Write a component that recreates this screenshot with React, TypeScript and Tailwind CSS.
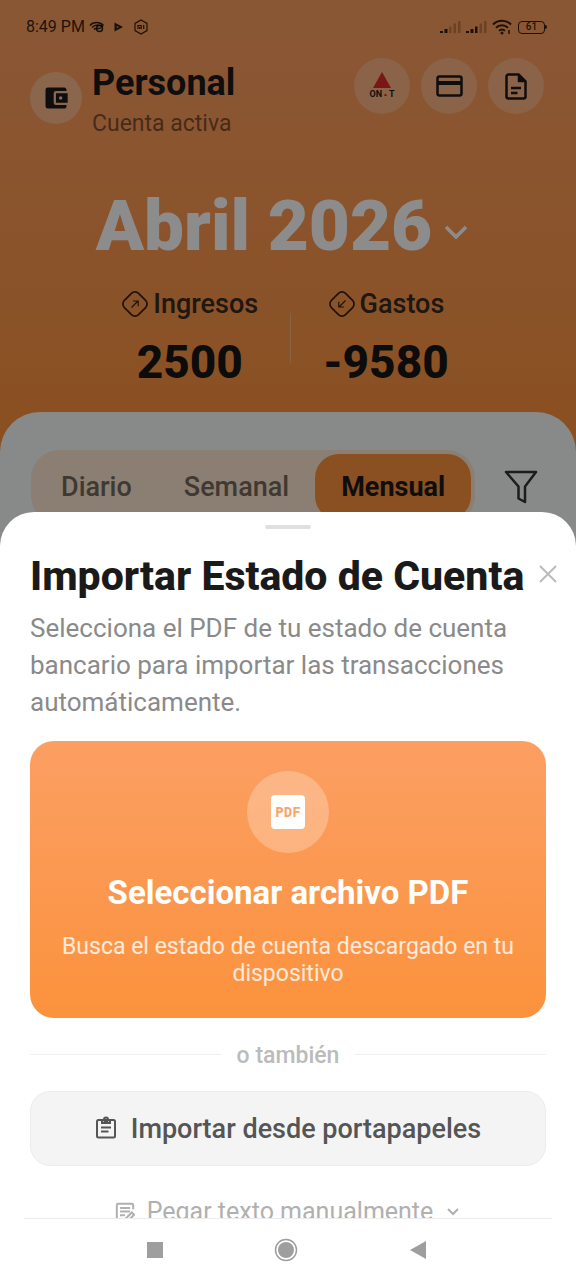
import type { ReactNode } from "react";
import { MdAccountBalanceWallet } from "react-icons/md";

function StatusBar() {
  return (
    <div className="flex h-[54px] items-center justify-between pr-[29px] pl-[26px] text-black/80">
      <div className="flex items-center">
        <span className="text-base">8:49 PM</span>
        <svg className="ml-1 h-4 w-4" viewBox="0 0 16 16" fill="none" stroke="currentColor" strokeWidth="1.5">
          <path d="M1 6.500C4 2.500 11 2.500 14.500 6.500" />
          <path d="M3 8.500C6 5.500 10 5.500 14 7.500" />
          <circle cx="10.500" cy="9.500" r="3" />
          <path d="M5 10.500C7 8 9 11 12.500 8.500" />
        </svg>
        <svg className="ml-2 h-3 w-3" viewBox="0 0 12 12">
          <path d="M1.500 1.500 10 6l-8.500 4.500z" fill="currentColor" />
          <circle cx="4.500" cy="6" r="1" fill="#c97c48" />
        </svg>
        <svg className="ml-2 h-4 w-4" viewBox="0 0 16 16" fill="none" stroke="currentColor" strokeWidth="1.2">
          <path d="M8 1l6 3.400v7.200L8 15l-6-3.400V4.400z" />
          <path d="M5 10V6.500h3.200V10M6.700 8v2M10.700 6v4" />
        </svg>
      </div>
      <div className="flex items-center">
        {[0, 1].map((n) => (
          <svg key={n} className="mr-[5px] h-[14px] w-[21px]" viewBox="0 0 21 14" fill="currentColor">
            <path d="M0 11h3v2H0zM4.500 9h3v4h-3z" />
            <path d="M9 6.500h2.500V13H9z" opacity={n ? 1 : 0.3} />
            <path d="M13.500 3.500H16V13h-2.500zM18 1h2.500v12H18z" opacity=".3" />
          </svg>
        ))}
        <svg className="mr-[6px] h-4 w-5" viewBox="0 0 20 16" fill="none" stroke="currentColor" strokeWidth="2">
          <path d="M1 5.500C6 .5 14 .5 19 5.500M4 8.800c3.500-3.300 8.500-3.300 12 0M7 11.800c2-1.700 4-1.700 6 0" />
          <circle cx="10" cy="14" r="1.500" fill="currentColor" stroke="none" />
          <path d="M17 11v4" strokeWidth="1.500" />
        </svg>
        <span className="flex h-[13px] w-[27px] items-center justify-center rounded-[4px] border-[1.5px] border-black/80 text-[10px] leading-[10px] font-medium">
          61
        </span>
        <span className="h-1 w-[2px] rounded-r bg-black/80" />
      </div>
    </div>
  );
}

function RoundButton({ label, children }: { label: string; children: ReactNode }) {
  return (
    <button aria-label={label} className="flex size-14 flex-col items-center justify-center rounded-full bg-white/25 text-[#1a1a1a]">
      {children}
    </button>
  );
}

function Diamond({ arrow }: { arrow: string }) {
  return (
    <svg className="size-7" viewBox="0 0 28 28" fill="none" stroke="#3a2212">
      <rect x="4" y="4" width="20" height="20" rx="5" strokeWidth="1.700" transform="rotate(45 14 14)" />
      <path d={arrow} strokeWidth="1.200" />
    </svg>
  );
}

function Total({ label, value, arrow }: { label: string; value: string; arrow: string }) {
  return (
    <div className="flex flex-col items-center">
      <div className="flex items-center gap-1">
        <Diamond arrow={arrow} />
        <span className="text-[27px] leading-9 font-medium text-[#3a2a1e]">{label}</span>
      </div>
      <span className="mt-3 text-[46px] leading-[56px] font-extrabold text-[#161616]">{value}</span>
    </div>
  );
}

function Dashboard() {
  return (
    <div className="flex grow flex-col bg-linear-to-b from-[#fb9f62] to-[#fb923c] to-[442px]">
      <StatusBar />
      <header className="flex items-start justify-between pt-1 pr-[32px] pl-[30px]">
        <div className="flex items-start gap-[10px]">
          <div className="mt-[14px] flex size-[52px] items-center justify-center rounded-full bg-white/30 text-[#1a1a1a]">
            <MdAccountBalanceWallet className="size-[28px]" />
          </div>
          <div>
            <p className="text-[36px] leading-[50px] font-bold text-[#1a1a1a]">Personal</p>
            <p className="text-[23px] leading-8 text-black/50">Cuenta activa</p>
          </div>
        </div>
        <div className="flex gap-[11px]">
          <RoundButton label="ONAT">
            <svg className="h-[16px] w-[18px]" viewBox="0 0 18 16">
              <path d="M9 0l9 16H0z" fill="#e02828" />
            </svg>
            <span className="flex items-center text-[9px] leading-[12px] font-bold">
              ON<span className="px-px text-[5px] text-[#e02828]">▲</span>T
            </span>
          </RoundButton>
          <RoundButton label="Tarjetas">
            <svg className="h-[22px] w-[27px]" viewBox="0 0 27 22" fill="none" stroke="currentColor" strokeWidth="2.500">
              <rect x="1.500" y="1.500" width="24" height="19" rx="2" />
              <path d="M1.500 8h24" strokeWidth="4" />
            </svg>
          </RoundButton>
          <RoundButton label="Documento">
            <svg className="h-[27px] w-[22px]" viewBox="0 0 22 27" fill="none" stroke="currentColor" strokeWidth="2.500" strokeLinejoin="round">
              <path d="M13.500 1.500h-10a2 2 0 0 0-2 2v20a2 2 0 0 0 2 2h15a2 2 0 0 0 2-2v-15z" />
              <path d="M13.500 1.500v7h7z" fill="currentColor" strokeWidth="1.500" />
              <path d="M6 15h10M6 20h6.500" />
            </svg>
          </RoundButton>
        </div>
      </header>
      <button className="mt-[46px] flex items-center justify-center gap-2 pr-2 text-white">
        <span className="text-[71px] leading-[80px] font-black">Abril 2026</span>
        <svg className="mt-3 size-8" viewBox="0 0 32 32" fill="none" stroke="currentColor" strokeWidth="3.500">
          <path d="M6 11l10 10 10-10" />
        </svg>
      </button>
      <div className="mt-5 flex items-center justify-center gap-8 pr-[6px]">
        <Total label="Ingresos" value="2500" arrow="M10.500 17.500l6.500-6.500M12 11h5.200v5.200" />
        <div className="h-[50px] w-px bg-white/30" />
        <Total label="Gastos" value="-9580" arrow="M17.500 10.500L11 17M16 17h-5.200v-5.200" />
      </div>
      <main className="mt-[22px] grow rounded-t-[40px] bg-[#f8fcfa] pt-[38px] pr-[37px] pl-[31px]">
        <div className="flex items-center justify-between">
          <div className="flex rounded-[28px] bg-[#fde7d1] p-1 text-[27px] leading-[66px] font-medium text-[#76695c]">
            <button className="px-[26px]">Diario</button>
            <button className="px-[26px]">Semanal</button>
            <button className="rounded-[24px] bg-[#fb923c] px-[26px] font-bold text-[#1a1a1a]">Mensual</button>
          </div>
          <button aria-label="Filtrar">
            <svg className="h-[34px] w-[36px]" viewBox="0 0 36 34" fill="none" stroke="#333" strokeWidth="2.500" strokeLinejoin="round">
              <path d="M3 2h30L22 16.500V32L15.500 28.500V16.500z" />
            </svg>
          </button>
        </div>
      </main>
    </div>
  );
}

function ImportSheet() {
  return (
    <section role="dialog" aria-labelledby="sheet-title" className="absolute inset-x-0 top-[40%] bottom-0 flex flex-col overflow-hidden rounded-t-[34px] bg-white">
      <div className="min-h-0 grow overflow-hidden px-[30px] pt-[13px]">
        <div className="mx-auto h-1 w-[46px] rounded-full bg-[#e0e0e0]" />
        <div className="mt-[21px] -mr-[11px] flex items-center justify-between">
          <h1 id="sheet-title" className="text-[41px] leading-[52px] font-extrabold whitespace-nowrap text-[#1a1a1a]">
            Importar Estado de Cuenta
          </h1>
          <button aria-label="Cerrar" className="mb-1">
            <svg className="size-[18px]" viewBox="0 0 18 18" stroke="#bbb" strokeWidth="2">
              <path d="M1 1l16 16M17 1L1 17" />
            </svg>
          </button>
        </div>
        <p className="mt-2 text-[26px] leading-[37px] text-[#8a8a8a]">
          Selecciona el PDF de tu estado de cuenta bancario para importar las transacciones automáticamente.
        </p>
        <button className="mt-5 flex w-full flex-col items-center rounded-[24px] bg-linear-to-b from-[#fb9f62] to-[#fb923c] px-6 pt-[30px] pb-[31px] text-white">
          <span className="flex size-[82px] items-center justify-center rounded-full bg-white/25">
            <span className="flex size-[34px] items-center justify-center rounded-[4px] bg-white font-['DejaVu_Sans_Mono',monospace] text-[14px] font-bold text-[#fba468]">
              PDF
            </span>
          </span>
          <span className="mt-5 text-[33px] leading-10 font-bold">Seleccionar archivo PDF</span>
          <span className="mt-5 text-[23px] leading-[27px] text-white/80">
            Busca el estado de cuenta descargado en tu dispositivo
          </span>
        </button>
        <div className="mt-5 flex items-center gap-4">
          <span className="mb-1 h-px grow bg-[#f0f0f0]" />
          <span className="text-[23px] leading-9 font-medium text-[#bbb]">o también</span>
          <span className="mb-1 h-px grow bg-[#f0f0f0]" />
        </div>
        <button className="mt-[17px] flex w-full items-center justify-center gap-[14px] rounded-[20px] border border-[#ececec] bg-[#f4f4f4] pt-[19px] pb-[17px] text-[27px] leading-[37px] font-medium text-[#555]">
          <svg className="mb-1 h-[24px] w-[22px]" viewBox="0 0 22 24" fill="none" stroke="currentColor" strokeWidth="2">
            <rect x="2" y="4" width="18" height="17.500" rx="1.500" />
            <path d="M7 4v3h8V4" />
            <circle cx="11" cy="3.500" r="2" />
            <path d="M6 11.500h10M6 15.500h7.500" />
          </svg>
          Importar desde portapapeles
        </button>
        <button className="mt-7 flex w-full items-center justify-center gap-3 text-[25px] leading-9 text-[#b0b0b0]">
          <svg className="size-5" viewBox="0 0 22 22" fill="none" stroke="currentColor" strokeWidth="2.200">
            <path d="M20 8V3.500A1.500 1.500 0 0 0 18.500 2h-15A1.500 1.500 0 0 0 2 3.500v15A1.500 1.500 0 0 0 3.500 20H9M5.500 6.500h11M5.500 10.500h11M5.500 14.500H11M11.500 21v-2.500l7-7 2.500 2.500-7 7z" />
          </svg>
          Pegar texto manualmente
          <svg className="size-4" viewBox="0 0 16 16" fill="none" stroke="currentColor" strokeWidth="2">
            <path d="M3 5l5 5 5-5" />
          </svg>
        </button>
      </div>
      <nav className="mx-6 flex h-[62px] shrink-0 items-center justify-between border-t border-[#ececec] pr-[125px] pl-[123px] text-[#9e9e9e]">
        <button aria-label="Recientes" className="block size-4 bg-[#9e9e9e]" />
        <button aria-label="Inicio">
          <svg className="size-6" viewBox="0 0 24 24" fill="currentColor">
            <circle cx="12" cy="12" r="10.500" fill="none" stroke="currentColor" strokeWidth="1.500" />
            <circle cx="12" cy="12" r="8" />
          </svg>
        </button>
        <button aria-label="Atrás">
          <svg className="size-[18px]" viewBox="0 0 18 18" fill="currentColor">
            <path d="M17 0v18L1 9z" />
          </svg>
        </button>
      </nav>
    </section>
  );
}

export default function App() {
  return (
    <div className="relative flex min-h-screen flex-col overflow-hidden font-[Roboto,sans-serif]">
      <Dashboard />
      <div className="absolute inset-0 bg-black/45" />
      <ImportSheet />
    </div>
  );
}
